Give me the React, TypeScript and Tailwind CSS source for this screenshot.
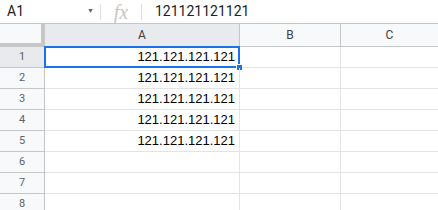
import React from 'react';

const ROWS = 8;
const VALUE = '121.121.121.121';

function RowHeader({ n, active }: { n: number; active?: boolean }) {
  return (
    <div
      className={`w-[45px] h-[21px] shrink-0 border-r border-b border-[#c4c7c5] flex items-center justify-center text-[11px] text-[#5f6368] ${
        active ? 'bg-[#e8eaed]' : 'bg-[#f8f9fa]'
      }`}
    >
      {n}
    </div>
  );
}

export default function App() {
  return (
    <div
      className="w-[438px] h-[210px] overflow-hidden bg-white text-[#202124]"
      style={{ fontFamily: 'Roboto, "Liberation Sans", Arial, sans-serif' }}
    >
      {/* formula bar */}
      <div className="h-[24px] flex items-center border-b border-[#c4c7c5]">
        <div className="w-[100px] flex items-center pl-[7px] pr-[6px] text-[14px]">
          <span>A1</span>
          <span className="ml-auto text-[#5f6368] text-[7px] leading-none">▼</span>
        </div>
        <div className="w-px h-[16px] bg-[#e0e0e0]" />
        <div
          className="w-[40px] text-center text-[20px] text-[#c6c6c6] italic leading-none"
          style={{ fontFamily: '"Liberation Serif", "Times New Roman", serif' }}
        >
          fx
        </div>
        <div className="w-px h-[16px] bg-[#e0e0e0]" />
        <div className="pl-[13px] text-[14px]">121121121121</div>
      </div>

      {/* column headers */}
      <div className="flex h-[23px]">
        <div className="w-[45px] shrink-0 bg-[#f8f9fa] border-r-4 border-b-4 border-[#c7c7c7]" />
        <div className="w-[195px] shrink-0 bg-[#e8eaed] border-r border-b border-[#c4c7c5] flex items-center justify-center text-[12px] text-[#3c4043]">
          A
        </div>
        <div className="w-[101px] shrink-0 bg-[#f8f9fa] border-r border-b border-[#c4c7c5] flex items-center justify-center text-[12px] text-[#3c4043]">
          B
        </div>
        <div className="flex-1 bg-[#f8f9fa] border-b border-[#c4c7c5] flex items-center justify-center text-[12px] text-[#3c4043]">
          C
        </div>
      </div>

      {/* rows */}
      {Array.from({ length: ROWS }, (_, i) => i + 1).map((n) => (
        <div key={n} className="flex">
          <RowHeader n={n} active={n === 1} />
          <div
            className="relative w-[195px] h-[21px] shrink-0 border-r border-b border-[#e2e3e3] flex items-center justify-end pr-[4px] text-[13px] text-black"
            style={{ fontFamily: '"Liberation Sans", Arial, sans-serif' }}
          >
            {n <= 5 ? VALUE : ''}
            {n === 1 && (
              <>
                <div className="absolute -left-px -top-px -right-px -bottom-px border-2 border-[#1a73e8]" />
                <div className="absolute -right-[4px] -bottom-[4px] w-[7px] h-[7px] bg-[#1a73e8] border border-white" />
              </>
            )}
          </div>
          <div className="w-[101px] h-[21px] shrink-0 border-r border-b border-[#e2e3e3]" />
          <div className="flex-1 h-[21px] border-b border-[#e2e3e3]" />
        </div>
      ))}
    </div>
  );
}
